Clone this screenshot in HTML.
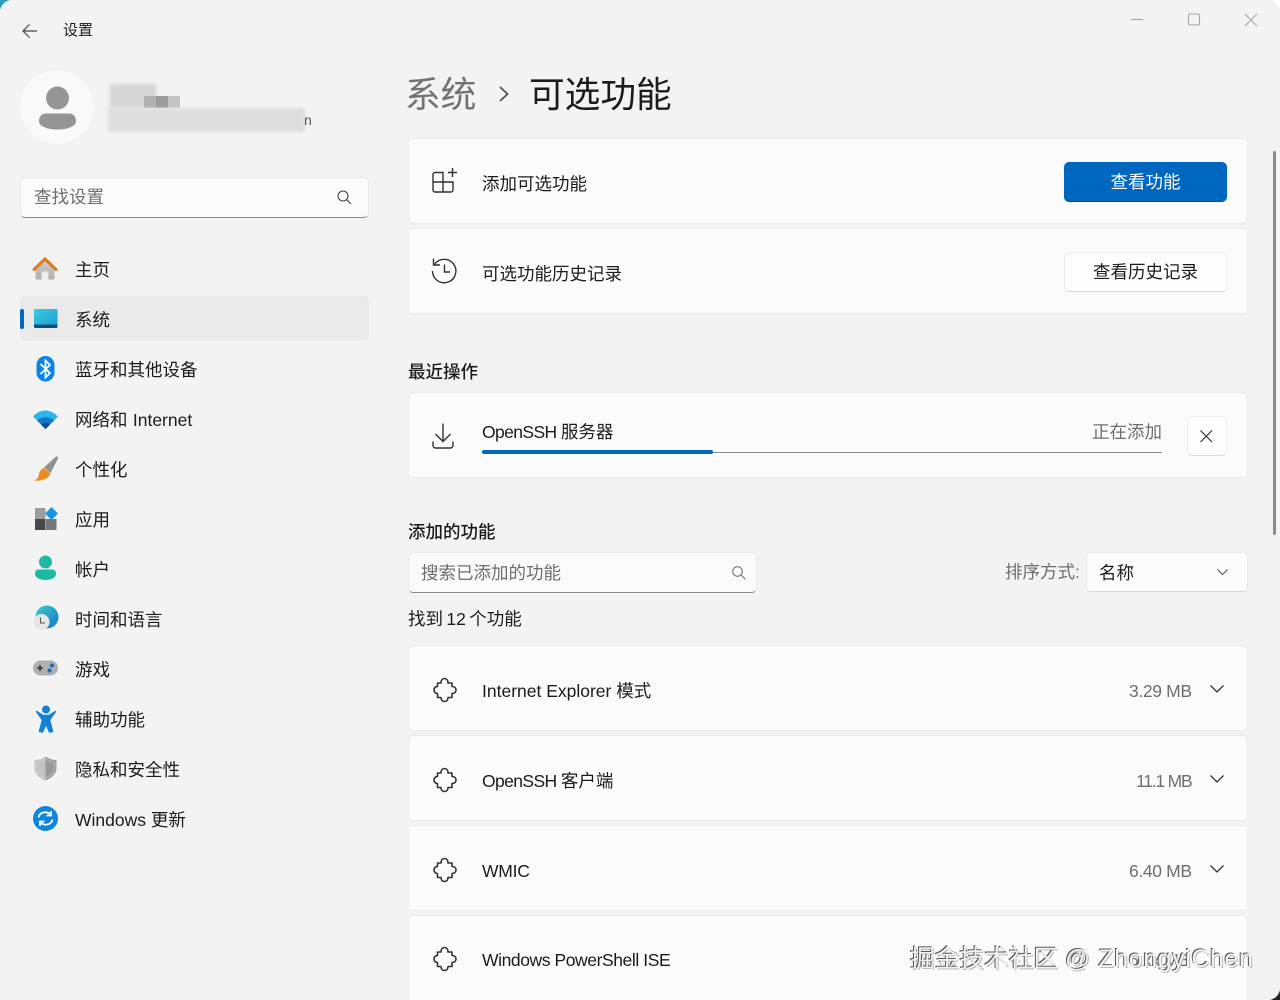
<!DOCTYPE html>
<html lang="zh-CN"><head><meta charset="utf-8"><title>设置</title>
<style>
html,body{margin:0;padding:0;width:1280px;height:1000px;overflow:hidden;background:#f3f3f3}
body{position:relative;font-family:"Liberation Sans","Noto Sans CJK SC",sans-serif;font-size:17.5px;color:#1b1b1b;font-weight:400}
.t{position:absolute;white-space:nowrap;line-height:24px;height:24px}
.card{position:absolute;left:408px;width:838px;background:#fbfbfb;border:1px solid #ebebeb;border-radius:5px}
.g{color:#6e6e6e}
svg{position:absolute;overflow:visible}
.nav{left:75px}
.b{position:absolute}
.n{letter-spacing:-.6px}
.s{letter-spacing:-.35px}
</style></head><body>

<!-- title bar -->
<svg style="left:22px;top:23px" width="16" height="16" viewBox="0 0 16 16" fill="none" stroke="#444" stroke-width="1.2"><path d="M15 8H1.5M7.500 1.500L1 8l6.500 6.500"/></svg>
<div class="t" style="left:63px;top:19px;font-size:15px">设置</div>
<svg style="left:1131px;top:14px" width="120" height="12" fill="none" stroke="#a6a6a6" stroke-width="1.1"><path d="M0 5.500H12"/><rect x="57.500" y="0" width="11" height="11" rx="1.500"/><path d="M114 0L126 12M126 0L114 12"/></svg>

<!-- user -->
<div class="b" style="left:20px;top:70px;width:74px;height:74px;border-radius:50%;background:#f9f9f9"></div>
<svg style="left:38px;top:84px" width="40" height="46"><circle cx="19.500" cy="14" r="11.500" fill="#959595"/><path d="M1 37.500C1 33 3 29.500 8 29.500H31C36 29.500 38 33 38 37.500C38 42 30 45.500 19.500 45.500C9 45.500 1 42 1 37.500Z" fill="#959595"/></svg>
<div class="b" style="left:110px;top:84px;width:46px;height:24px;background:#d6d6d6;filter:blur(1.500px)"></div>
<div class="b" style="left:144px;top:96px;width:12px;height:12px;background:#b0b0b0"></div>
<div class="b" style="left:156px;top:96px;width:12px;height:12px;background:#9b9b9b"></div>
<div class="b" style="left:168px;top:96px;width:12px;height:12px;background:#c4c4c4"></div>
<div class="b" style="left:108px;top:108px;width:197px;height:24px;background:#dedede;filter:blur(1.500px)"></div>
<div class="t" style="left:304px;top:108px;font-size:14px;color:#555">n</div>

<!-- search -->
<div class="b" style="left:20px;top:177px;width:347px;height:39px;background:#fbfbfb;border:1px solid #e8e8e8;border-bottom:1px solid #8a8a8a;border-radius:5px"></div>
<div class="t g" style="left:34px;top:185px">查找设置</div>
<svg style="left:337px;top:190px" width="15" height="15" fill="none" stroke="#444" stroke-width="1.1"><circle cx="6" cy="6" r="5"/><path d="M9.800 9.800L14 14"/></svg>

<!-- nav -->
<div class="b" style="left:20px;top:296px;width:349px;height:45px;background:#eaeaea;border-radius:5px"></div>
<div class="b" style="left:20px;top:309px;width:3.500px;height:20px;background:#0067c0;border-radius:2px"></div>

<svg style="left:32px;top:256px" width="26" height="25"><defs><linearGradient id="h" x1="0" y1="0" x2="0" y2="1"><stop offset="0" stop-color="#d4d1cd"/><stop offset="1" stop-color="#aeaeae"/></linearGradient></defs><path d="M3.500 12L13 3l9.500 9v10a1.500 1.500 0 0 1-1.500 1.500H5a1.500 1.500 0 0 1-1.500-1.500Z" fill="url(#h)"/><path d="M9.500 23.500V16.500a1 1 0 0 1 1-1h5a1 1 0 0 1 1 1v7Z" fill="#ededed"/><path d="M2 13.500L13 3l11 10.500" fill="none" stroke="#de7a1c" stroke-width="3" stroke-linecap="round"/></svg>
<div class="t nav" style="top:258px">主页</div>

<svg style="left:34px;top:309px" width="24" height="20"><defs><linearGradient id="s" x1="0" y1="0" x2="1" y2="1"><stop offset="0" stop-color="#3ccbe0"/><stop offset="1" stop-color="#1a9bd0"/></linearGradient></defs><rect width="23.500" height="19" rx="1.500" fill="url(#s)"/><path d="M0 15.500H23.500V17.500a1.500 1.500 0 0 1-1.500 1.500H1.500A1.500 1.500 0 0 1 0 17.500Z" fill="#0b4f80"/></svg>
<div class="t nav" style="top:308px">系统</div>

<svg style="left:36px;top:356px" width="20" height="26"><rect x="0.500" y="0" width="18" height="25.500" rx="9" fill="#0a84ec"/><path d="M4.500 8L14 17l-4.500 4.500V4.500L14 9 4.500 18" fill="none" stroke="#fff" stroke-width="1.800"/></svg>
<div class="t nav" style="top:358px">蓝牙和其他设备</div>

<svg style="left:32px;top:409px" width="27" height="21"><path d="M1 7.500C8-.5 18-.5 26 7.500L13.500 20Z" fill="#29b6ea"/><path d="M5 11.500C10 7 17 7 22 11.500L13.500 20Z" fill="#1377c9"/><path d="M9 15.500C12 13.500 15 13.500 18 15.500L13.500 20Z" fill="#0b4d95"/></svg>
<div class="t nav" style="top:408px;word-spacing:.5px">网络和 Internet</div>

<svg style="left:33px;top:456px" width="26" height="26"><path d="M11 11.500L22.500 1c1.500-1 3-.2 2.500 1.500L17.500 17Z" fill="#8f9091"/><path d="M11 12L17.500 17.500C15.500 23 8 25.500 1 24.500 4.500 23 5.500 21.500 6 18 6.500 15 8.500 13 11 12Z" fill="#ef8a1f"/></svg>
<div class="t nav" style="top:458px">个性化</div>

<svg style="left:35px;top:507px" width="24" height="24"><rect x="0" y="1" width="10.500" height="11.500" fill="#9d9d9f"/><rect x="0" y="12" width="10.500" height="11" fill="#46484a"/><rect x="11" y="12" width="10.500" height="11" fill="#75787a"/><path d="M16.500 0L23 6.500 16.500 13 10 6.500Z" fill="#1b93e8"/></svg>
<div class="t nav" style="top:508px">应用</div>

<svg style="left:35px;top:555px" width="22" height="26"><circle cx="10.500" cy="7" r="6.500" fill="#1fb8a5"/><path d="M0 19c0-3 1.500-4.500 4-4.500h13c2.500 0 4 1.500 4 4.500 0 3.500-4.500 6-10.500 6S0 22.500 0 19Z" fill="#1fb8a5"/></svg>
<div class="t nav" style="top:558px">帐户</div>

<svg style="left:33px;top:605px" width="26" height="28"><defs><linearGradient id="gl" x1="0" y1="0" x2="1" y2="1"><stop offset="0" stop-color="#3ac8cf"/><stop offset="1" stop-color="#1678d0"/></linearGradient></defs><circle cx="14" cy="12" r="11.500" fill="url(#gl)"/><circle cx="8.500" cy="17" r="8" fill="#e6e6e6"/><path d="M7.500 12.500V18H12" fill="none" stroke="#555" stroke-width="1.100"/></svg>
<div class="t nav" style="top:608px">时间和语言</div>

<svg style="left:32px;top:659px" width="27" height="19"><rect x="1" y="1.500" width="25" height="15" rx="7.500" fill="#aeb0b2"/><path d="M5 9h6M8 6v6" stroke="#333" stroke-width="1.500"/><circle cx="20" cy="6.500" r="2" fill="#0f6cc0"/><circle cx="17.500" cy="11.500" r="2" fill="#0f6cc0"/></svg>
<div class="t nav" style="top:658px">游戏</div>

<svg style="left:34px;top:705px" width="24" height="28"><circle cx="12" cy="4.500" r="4" fill="#1382d6"/><path d="M2.500 6.500L9 10.500H15L21.500 6.500 15.500 15 18.500 26.500 15.500 27 12 19 8.500 27 5.500 26.500 8.500 15Z" fill="#1382d6" stroke="#1382d6" stroke-width="1.500" stroke-linejoin="round"/></svg>
<div class="t nav" style="top:708px">辅助功能</div>

<svg style="left:33px;top:756px" width="25" height="25"><path d="M12.500 0.500C16 3 19.500 4 23.500 4V12C23.500 18 18 22.500 12.500 24.500Z" fill="#989a9c"/><path d="M12.500 0.500C9 3 5.500 4 1.500 4V12C1.500 18 7 22.500 12.500 24.500Z" fill="#c2c3c4"/><path d="M12.500 3C9.500 5 6.500 6 3.500 6V12C3.500 16.500 8 20.500 12.500 22.500 17 20.500 21.500 16.500 21.500 12V6C18.500 6 15.500 5 12.500 3Z" fill="none" stroke="#d2d2d2" stroke-width=".6"/></svg>
<div class="t nav" style="top:758px">隐私和安全性</div>

<svg style="left:33px;top:806px" width="25" height="25" fill="none"><circle cx="12.500" cy="12.500" r="12.500" fill="#0f86dc"/><path d="M5.500 11.500C6.500 6 14 4.500 18 9M18 5v4.500h-4.500M19.500 13.500C18.500 19 11 20.500 7 16M7 20v-4.500h4.500" stroke="#fff" stroke-width="1.800"/></svg>
<div class="t nav" style="top:808px">Windows 更新</div>

<!-- header -->
<div class="t g" style="left:405px;top:71px;font-size:35.700px;line-height:48px;height:48px;color:#727272">系统</div>
<svg style="left:499px;top:86px" width="10" height="16" fill="none" stroke="#555" stroke-width="1.800"><path d="M1 1L8.500 8 1 15"/></svg>
<div class="t" style="left:529px;top:71px;font-size:35.700px;line-height:48px;height:48px">可选功能</div>

<!-- cards -->
<div class="card" style="top:138px;height:84px"></div>
<svg style="left:432px;top:168px" width="25" height="25" fill="none" stroke="#333" stroke-width="1.400"><path d="M3 4.500H11V24H3a2 2 0 0 1-2-2V6.500a2 2 0 0 1 2-2ZM1 14H21V22a2 2 0 0 1-2 2H11M20.500 0V9M16 4.500H25"/></svg>
<div class="t" style="left:482px;top:172px">添加可选功能</div>
<div class="b" style="left:1064px;top:162px;width:163px;height:40px;background:#0067c0;border-radius:5px;border-bottom:1px solid #00508f;box-sizing:border-box;color:#fff;text-align:center;line-height:41px">查看功能</div>

<div class="card" style="top:228px;height:84px"></div>
<svg style="left:431px;top:258px" width="26" height="26" fill="none" stroke="#333" stroke-width="1.400"><path d="M3.500 6.500A11.700 11.700 0 1 1 1.500 13M2.500 0.500V7H9M13.500 6.500V14H19"/></svg>
<div class="t" style="left:482px;top:262px">可选功能历史记录</div>
<div class="b" style="left:1064px;top:252px;width:163px;height:40px;background:#fdfdfd;border:1px solid #ececec;border-bottom-color:#d8d8d8;border-radius:5px;box-sizing:border-box;text-align:center;line-height:39px">查看历史记录</div>

<div class="t" style="left:408px;top:360px;font-weight:500">最近操作</div>

<div class="card" style="top:392px;height:84px"></div>
<svg style="left:432px;top:423px" width="23" height="26" fill="none" stroke="#333" stroke-width="1.400"><path d="M11 0.500V18M3.500 11L11 18.500 18.500 11M1 18.500V22.500A2.500 2.500 0 0 0 3.500 25H18.500A2.500 2.500 0 0 0 21 22.500V18.500"/></svg>
<div class="t" style="left:482px;top:420px"><span class="n">OpenSSH </span>服务器</div>
<div class="t g" style="left:1092px;top:420px">正在添加</div>
<div class="b" style="left:482px;top:452px;width:680px;height:1px;background:#8a8a8a"></div>
<div class="b" style="left:482px;top:450px;width:231px;height:4px;background:#0067c0;border-radius:2px"></div>
<div class="b" style="left:1187px;top:416px;width:38px;height:38px;background:#fdfdfd;border:1px solid #eeeeee;border-bottom-color:#dcdcdc;border-radius:5px"></div>
<svg style="left:1200px;top:430px" width="13" height="13" stroke="#333" stroke-width="1.200"><path d="M0.500 0.500L12 12M12 0.500L0.500 12"/></svg>

<div class="t" style="left:408px;top:520px;font-weight:500">添加的功能</div>
<div class="b" style="left:408px;top:552px;width:347px;height:39px;background:#fafafa;border:1px solid #e9e9e9;border-bottom:1px solid #8a8a8a;border-radius:5px"></div>
<div class="t g" style="left:421px;top:561px">搜索已添加的功能</div>
<svg style="left:732px;top:566px" width="14" height="14" fill="none" stroke="#777" stroke-width="1.100"><circle cx="5.500" cy="5.500" r="4.800"/><path d="M9 9L13.500 13.500"/></svg>
<div class="t g" style="left:1005px;top:560px">排序方式:</div>
<div class="b" style="left:1086px;top:552px;width:160px;height:38px;background:#fcfcfc;border:1px solid #e9e9e9;border-bottom-color:#d8d8d8;border-radius:5px"></div>
<div class="t" style="left:1099px;top:561px">名称</div>
<svg style="left:1217px;top:569px" width="11" height="7" fill="none" stroke="#555" stroke-width="1.100"><path d="M0.500 0.500L5.500 5.500 10.500 0.500"/></svg>
<div class="t" style="left:408px;top:607px;word-spacing:-1.500px">找到 12 个功能</div>

<div class="card" style="top:645px;height:84px"></div>
<div class="card" style="top:735px;height:84px"></div>
<div class="card" style="top:825px;height:84px"></div>
<div class="card" style="top:915px;height:90px"></div>

<svg width="0" height="0" style="position:absolute"><defs><path id="pz" d="M4.500 6H8C8 3 9.500 1.500 11.500 1.500S15 3 15 6H19V9.500C21.500 9.500 23 11 23 13S21.500 16.500 19 16.500V20.500H15C15 23 13.500 24.500 11.500 24.500S8 23 8 20.500H4.500V16.500C2.500 16.500 1 15 1 13S2.500 9.500 4.500 9.500Z" fill="none" stroke="#333" stroke-width="1.600" stroke-linejoin="round"/></defs></svg>

<svg style="left:433px;top:677px" width="24" height="26"><use href="#pz"/></svg>
<div class="t" style="left:482px;top:679px">Internet Explorer 模式</div>
<div class="t g s" style="left:1129px;top:679px">3.29 MB</div>
<svg style="left:1210px;top:685px" width="14" height="8" fill="none" stroke="#333" stroke-width="1.300"><path d="M0.500 0.500L7 7 13.500 0.500"/></svg>

<svg style="left:433px;top:767px" width="24" height="26"><use href="#pz"/></svg>
<div class="t" style="left:482px;top:769px"><span class="n">OpenSSH </span>客户端</div>
<div class="t g s" style="left:1136px;top:769px;letter-spacing:-1.200px">11.1 MB</div>
<svg style="left:1210px;top:775px" width="14" height="8" fill="none" stroke="#333" stroke-width="1.300"><path d="M0.500 0.500L7 7 13.500 0.500"/></svg>

<svg style="left:433px;top:857px" width="24" height="26"><use href="#pz"/></svg>
<div class="t" style="left:482px;top:859px;letter-spacing:-.25px">WMIC</div>
<div class="t g s" style="left:1129px;top:859px">6.40 MB</div>
<svg style="left:1210px;top:865px" width="14" height="8" fill="none" stroke="#333" stroke-width="1.300"><path d="M0.500 0.500L7 7 13.500 0.500"/></svg>

<svg style="left:433px;top:946px" width="24" height="26"><use href="#pz"/></svg>
<div class="t" style="left:482px;top:948px;letter-spacing:-.42px">Windows PowerShell ISE</div>
<div class="t g s" style="left:1129px;top:948px">6.xx MB</div>

<!-- scrollbar -->
<div class="b" style="left:1273px;top:151px;width:3px;height:384px;background:#8a8a8a;border-radius:2px"></div>

<!-- watermark -->
<div class="t" style="left:910px;top:945px;height:30px;line-height:30px;font-size:24.700px;color:#f2f2f2;text-shadow:-1px -1px 0 #555,1px 1px 0 #bbb">掘金技术社区 <span style="letter-spacing:.75px">@ ZhongyiChen</span></div>

<!-- window corners -->
<svg style="left:0;top:0" width="1280" height="1000"><path d="M0 0H10Q2 2 0 10Z" fill="#2a9fc4"/><path d="M1280 0H1270Q1278 2 1280 10Z" fill="#fff"/><path d="M1280 1000H1270Q1278 998 1280 990Z" fill="#222"/></svg>
</body></html>
